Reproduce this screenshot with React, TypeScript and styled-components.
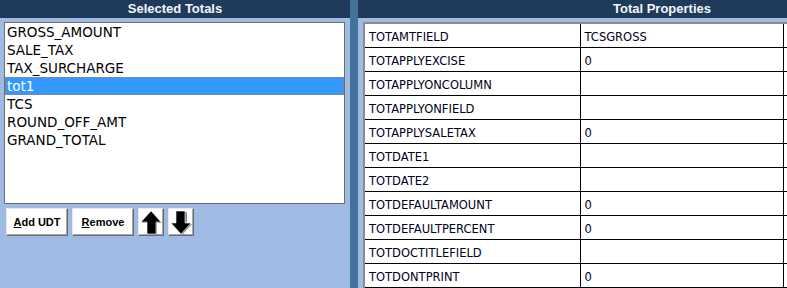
import React from "react";
import styled, { createGlobalStyle } from "styled-components";

const GlobalStyle = createGlobalStyle`
  html, body {
    margin: 0;
    padding: 0;
    overflow: hidden;
    background: #9fbbe3;
  }
`;

const Screen = styled.div`
  display: flex;
  width: 787px;
  height: 288px;
  overflow: hidden;
  background: #9fbbe3;
`;

const Panel = styled.div<{ $width: number }>`
  flex: 0 0 ${(p) => p.$width}px;
  display: flex;
  flex-direction: column;
  background: #9fbbe3;
`;

const PanelTitle = styled.div`
  height: 18px;
  line-height: 18px;
  background: #1f3a5a;
  color: #f4f6f8;
  font-family: "Liberation Sans", Arial, sans-serif;
  font-weight: bold;
  font-size: 13px;
  text-align: center;
`;

const Splitter = styled.div`
  flex: 0 0 8px;
  background: #43739b;
`;

const LeftBody = styled.div`
  display: flex;
  flex-direction: column;
  gap: 4px;
  padding: 4px 5px 0 4px;
`;

const ListBox = styled.div`
  height: 180px;
  background: #fff;
  border: 1px solid #6e6e6e;
  font-family: "DejaVu Sans", Verdana, sans-serif;
  font-size: 13.5px;
`;

const ListItem = styled.div<{ $selected?: boolean }>`
  height: 18px;
  line-height: 18px;
  padding-left: 2px;
  color: ${(p) => (p.$selected ? "#fff" : "#000")};
  background: ${(p) => (p.$selected ? "#3399ff" : "transparent")};
  outline: ${(p) => (p.$selected ? "1px dotted #c8783c" : "none")};
  outline-offset: -1px;
`;

const ButtonRow = styled.div`
  display: flex;
  gap: 4px;
  padding-left: 2px;
`;

const ToolButton = styled.button<{ $width: number }>`
  width: ${(p) => p.$width}px;
  height: 28px;
  padding: 0;
  display: flex;
  align-items: center;
  justify-content: center;
  background: #fff;
  border: 1px solid;
  border-color: #e8e8e8 #6a6a6a #6a6a6a #e8e8e8;
  box-shadow: inset -1px -1px 0 #a8a8a8, inset 1px 1px 0 #ffffff;
  font-family: "Liberation Sans", Arial, sans-serif;
  font-weight: bold;
  font-size: 11px;
  color: #000;

  u {
    text-decoration: underline;
  }
`;

const RightBody = styled.div`
  padding: 4px 0 0 5px;
`;

const PropTable = styled.table`
  border-collapse: collapse;
  background: #fff;
  border-left: 2px solid #8c8c8c;
  border-top: 2px solid #8c8c8c;
  font-family: "DejaVu Sans", Verdana, sans-serif;
  font-size: 11.5px;
  color: #00001a;
  table-layout: fixed;
`;

const Cell = styled.td<{ $width: number }>`
  width: ${(p) => p.$width}px;
  height: 20px;
  padding: 3px 0 0 4px;
  border-right: 1px solid #000;
  border-bottom: 1px solid #000;
  white-space: nowrap;
  overflow: hidden;
`;

const ArrowUp = () => (
  <svg width="22" height="25" viewBox="0 0 22 25">
    <polygon points="12,2 22,13 17,13 17,25 8,25 8,13 2,13" fill="#8a8a8a" />
    <polygon points="11,1 21,12 16,12 16,24 7,24 7,12 1,12" fill="#000" stroke="#fff" strokeWidth="0.6" />
  </svg>
);

const ArrowDown = () => (
  <svg width="22" height="25" viewBox="0 0 22 25">
    <polygon points="8,2 17,2 17,14 22,14 12,25 2,14 8,14" fill="#8a8a8a" />
    <polygon points="6,1 15,1 15,13 21,13 11,24 1,13 6,13" fill="#000" stroke="#fff" strokeWidth="0.6" />
  </svg>
);

const totals = [
  "GROSS_AMOUNT",
  "SALE_TAX",
  "TAX_SURCHARGE",
  "tot1",
  "TCS",
  "ROUND_OFF_AMT",
  "GRAND_TOTAL",
];

const properties: [string, string][] = [
  ["TOTAMTFIELD", "TCSGROSS"],
  ["TOTAPPLYEXCISE", "0"],
  ["TOTAPPLYONCOLUMN", ""],
  ["TOTAPPLYONFIELD", ""],
  ["TOTAPPLYSALETAX", "0"],
  ["TOTDATE1", ""],
  ["TOTDATE2", ""],
  ["TOTDEFAULTAMOUNT", "0"],
  ["TOTDEFAULTPERCENT", "0"],
  ["TOTDOCTITLEFIELD", ""],
  ["TOTDONTPRINT", "0"],
];

export default function App() {
  return (
    <>
      <GlobalStyle />
      <Screen>
        <Panel $width={350}>
          <PanelTitle>Selected Totals</PanelTitle>
          <LeftBody>
            <ListBox>
              {totals.map((t) => (
                <ListItem key={t} $selected={t === "tot1"}>
                  {t}
                </ListItem>
              ))}
            </ListBox>
            <ButtonRow>
              <ToolButton $width={62}>
                <u>A</u>dd UDT
              </ToolButton>
              <ToolButton $width={62}>
                <u>R</u>emove
              </ToolButton>
              <ToolButton $width={26}>
                <ArrowUp />
              </ToolButton>
              <ToolButton $width={26}>
                <ArrowDown />
              </ToolButton>
            </ButtonRow>
          </LeftBody>
        </Panel>
        <Splitter />
        <Panel $width={608}>
          <PanelTitle>Total Properties</PanelTitle>
          <RightBody>
            <PropTable>
              <tbody>
                {properties.map(([name, value]) => (
                  <tr key={name}>
                    <Cell $width={212}>{name}</Cell>
                    <Cell $width={201}>{value}</Cell>
                    <Cell $width={180}></Cell>
                  </tr>
                ))}
              </tbody>
            </PropTable>
          </RightBody>
        </Panel>
      </Screen>
    </>
  );
}
